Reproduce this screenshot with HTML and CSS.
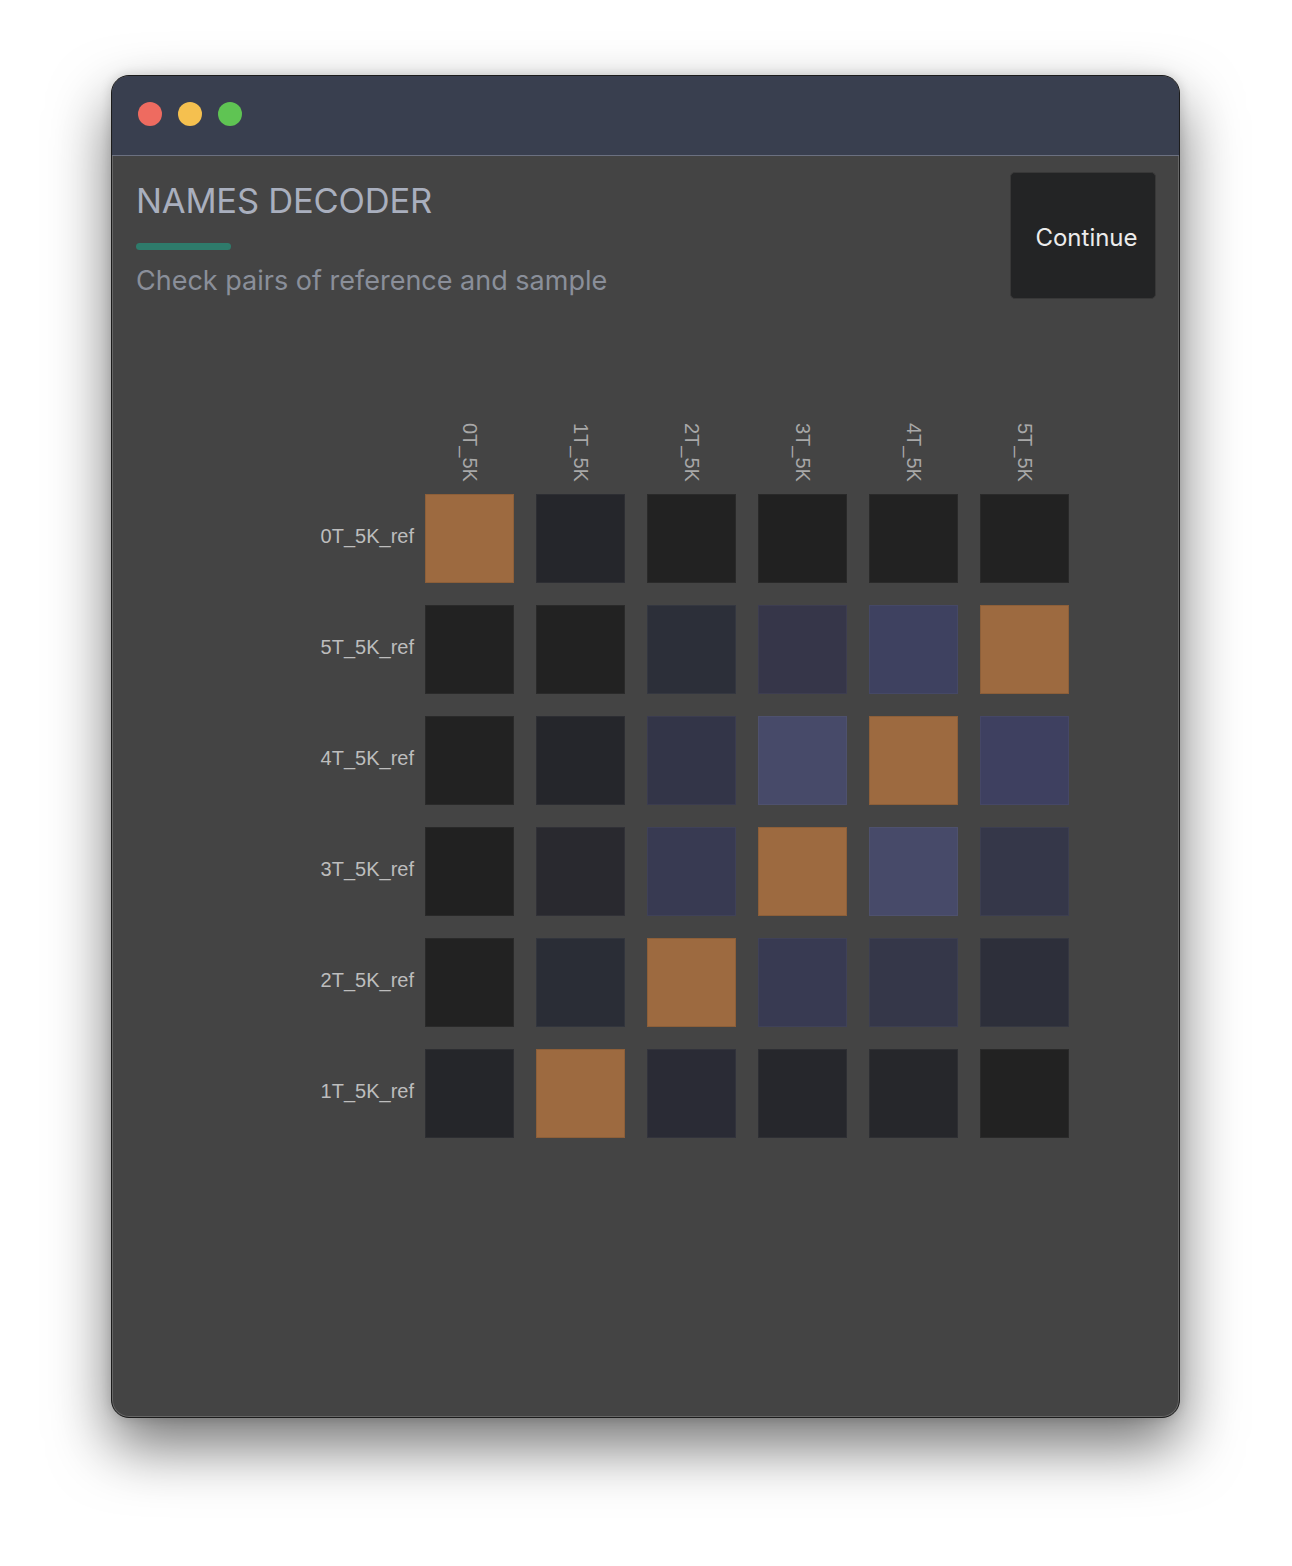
FILE: index.html
```html
<!DOCTYPE html>
<html>
<head>
<meta charset="utf-8">
<link rel="stylesheet" href="styles.css">
</head>
<body>
<div class="window">
  <div class="titlebar">
    <span class="dot red"></span>
    <span class="dot yellow"></span>
    <span class="dot green"></span>
  </div>
  <div class="content">
    <div class="header">
      <div class="heading">
        <h1 class="title">NAMES DECODER</h1>
        <div class="accent"></div>
        <p class="subtitle">Check pairs of reference and sample</p>
      </div>
      <button class="continue">Continue</button>
    </div>
    <div class="matrix">
      <div class="col-labels">
        <span class="col-label">0T_5K</span>
        <span class="col-label">1T_5K</span>
        <span class="col-label">2T_5K</span>
        <span class="col-label">3T_5K</span>
        <span class="col-label">4T_5K</span>
        <span class="col-label">5T_5K</span>
      </div>
      <div class="row">
        <span class="row-label">0T_5K_ref</span>
        <div class="cell hit"></div>
        <div class="cell" style="background:#25262b"></div>
        <div class="cell" style="background:#222222"></div>
        <div class="cell" style="background:#212121"></div>
        <div class="cell" style="background:#222222"></div>
        <div class="cell" style="background:#222222"></div>
      </div>
      <div class="row">
        <span class="row-label">5T_5K_ref</span>
        <div class="cell" style="background:#222222"></div>
        <div class="cell" style="background:#222222"></div>
        <div class="cell" style="background:#2c2f39"></div>
        <div class="cell" style="background:#363649"></div>
        <div class="cell" style="background:#3e4160"></div>
        <div class="cell hit"></div>
      </div>
      <div class="row">
        <span class="row-label">4T_5K_ref</span>
        <div class="cell" style="background:#222222"></div>
        <div class="cell" style="background:#25262b"></div>
        <div class="cell" style="background:#333548"></div>
        <div class="cell" style="background:#474a69"></div>
        <div class="cell hit"></div>
        <div class="cell" style="background:#3e4060"></div>
      </div>
      <div class="row">
        <span class="row-label">3T_5K_ref</span>
        <div class="cell" style="background:#212121"></div>
        <div class="cell" style="background:#29292f"></div>
        <div class="cell" style="background:#383a52"></div>
        <div class="cell hit"></div>
        <div class="cell" style="background:#474a69"></div>
        <div class="cell" style="background:#353749"></div>
      </div>
      <div class="row">
        <span class="row-label">2T_5K_ref</span>
        <div class="cell" style="background:#222222"></div>
        <div class="cell" style="background:#2a2d36"></div>
        <div class="cell hit"></div>
        <div class="cell" style="background:#383a52"></div>
        <div class="cell" style="background:#353749"></div>
        <div class="cell" style="background:#2d2f3a"></div>
      </div>
      <div class="row">
        <span class="row-label">1T_5K_ref</span>
        <div class="cell" style="background:#25262a"></div>
        <div class="cell hit"></div>
        <div class="cell" style="background:#2a2b35"></div>
        <div class="cell" style="background:#26272c"></div>
        <div class="cell" style="background:#26272b"></div>
        <div class="cell" style="background:#222222"></div>
      </div>
    </div>
  </div>
</div>
</body>
</html>
```
FILE: styles.css
```css
html, body {
  margin: 0;
  padding: 0;
  background: #ffffff;
}
body {
  padding: 75px 111px 0 111px;
  min-height: 1566px;
  box-sizing: border-box;
  font-family: Inter, "Noto Sans", sans-serif;
}
.window {
  width: 1067px;
  height: 1341px;
  border: 1px solid #1c1c1c;
  border-radius: 18px;
  overflow: hidden;
  background: #444444;
  box-shadow: 0 28px 60px rgba(0, 0, 0, 0.55), 0 0 12px rgba(0, 0, 0, 0.15), inset 0 0 0 1px #666666;
  display: flex;
  flex-direction: column;
}
.titlebar {
  height: 80px;
  flex: none;
  background: #393f4f;
  border-bottom: 1px solid #6b7080;
  display: flex;
  align-items: center;
  gap: 16px;
  padding-left: 26px;
  padding-bottom: 4px;
  box-sizing: border-box;
}
.dot {
  width: 24px;
  height: 24px;
  border-radius: 50%;
  display: block;
}
.red { background: #ee6b60; }
.yellow { background: #f5c04f; }
.green { background: #5fc453; }
.content {
  flex: 1;
  display: flex;
  flex-direction: column;
}
.header {
  display: flex;
  justify-content: space-between;
  align-items: flex-start;
  padding: 16px 23px 0 24px;
}
.heading {
  display: flex;
  flex-direction: column;
}
.title {
  margin: 0;
  margin-top: 9px;
  font-size: 34.5px;
  line-height: 40px;
  font-weight: 400;
  color: #a9afbe;
  letter-spacing: -0.2px;
}
.accent {
  width: 95px;
  height: 7px;
  border-radius: 4px;
  background: #2e7b6b;
  margin-top: 22px;
}
.subtitle {
  margin: 14px 0 0 0;
  font-size: 27px;
  line-height: 34px;
  color: #8a8f9a;
}
.continue {
  width: 146px;
  height: 127px;
  background: #232425;
  border: 1px solid #383838;
  border-radius: 5px;
  color: #ececec;
  font-family: Inter, "Noto Sans", sans-serif;
  font-size: 24px;
  padding: 3px 0 0 7px;
}
.matrix {
  margin-top: 123px;
  margin-left: 197px;
  display: flex;
  flex-direction: column;
  gap: 22px;
}
.col-labels {
  display: flex;
  gap: 22px;
  padding-left: 116px;
  margin-bottom: -10px;
}
.col-label {
  width: 89px;
  height: 60px;
  writing-mode: vertical-rl;
  font-family: "Liberation Sans", Arial, sans-serif;
  font-size: 20px;
  line-height: 89px;
  color: #a8a8a8;
  text-align: end;
}
.row {
  display: flex;
  align-items: center;
  gap: 22px;
}
.row-label {
  width: 105px;
  margin-right: -11px;
  padding-bottom: 5px;
  text-align: right;
  font-family: "Liberation Sans", Arial, sans-serif;
  font-size: 20px;
  color: #bdbdbd;
  white-space: nowrap;
}
.cell {
  width: 89px;
  height: 89px;
  box-sizing: border-box;
  border: 1px solid rgba(255, 255, 255, 0.04);
}
.hit {
  background: #9d6a40;
  border-color: rgba(0, 0, 0, 0.1);
}
```
